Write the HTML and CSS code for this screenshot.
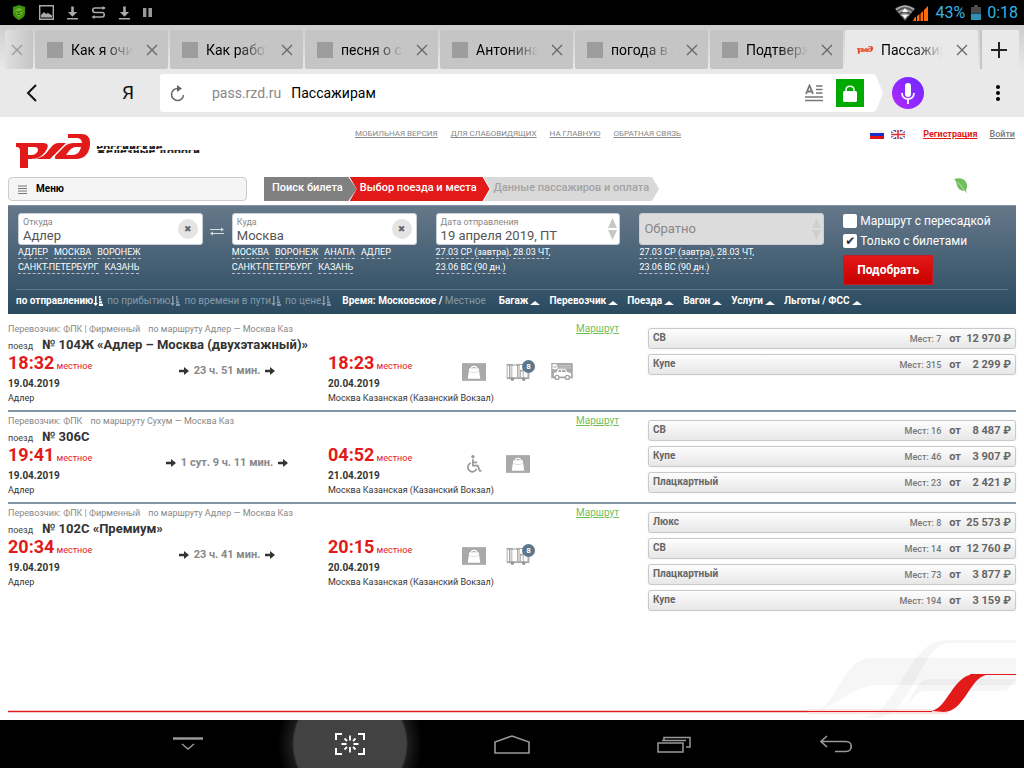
FILE: index.html
```html
<!DOCTYPE html>
<html lang="ru">
<head>
<meta charset="utf-8">
<title>Пассажирам</title>
<link rel="stylesheet" href="styles.css">
</head>
<body>
<svg class="defs" aria-hidden="true">
  <symbol id="x" viewBox="0 0 12 12"><path d="M1 1l10 10M11 1L1 11" stroke="currentColor" stroke-width="1.3" fill="none"/></symbol>
  <symbol id="dl" viewBox="0 0 12 14"><path d="M4.600 0h2.800v6H11L6 11 1 6h3.600zM0 12.500h12V14H0z" fill="currentColor"/></symbol>
  <symbol id="rzd" viewBox="0 0 74 34"><path fill="currentColor" fill-rule="evenodd" d="M0 9H27C33 9 33 13 29 18 26 22 22 25 15 25H12V34H4V17C4 14 3 13 0 13zM12 13V21H16C19 21 22 18 22 16 22 14 21 13 18 13z"/><path fill="currentColor" fill-rule="evenodd" d="M42 9H50L34 25H20L27 22C32 19 36 9 42 9zM52 0H65C71 0 74 3 74 9V11C73 20 68 25 60 25H41C38 25 38 23 41 20L48 13C51 10 54 9 58 9H66C66 6 64 4 60 4H52zM60 13C57 13 56 14 53 17L50 21H56C61 21 64 18 65 13z"/></symbol>
  <symbol id="sort" viewBox="0 0 10 10"><path fill="currentColor" d="M2 0h1.500v7H5L2.700 10 .300 7H2zM6 0h1.500v2H6zM6 2.600h2.300v2H6zM6 5.200h3v2H6zM6 7.800h4V10H6z"/></symbol>
  <symbol id="arrow" viewBox="0 0 10 8"><path fill="currentColor" d="M0 2.800h5V0l5 4-5 4V5.200H0z"/></symbol>
  <symbol id="bag" viewBox="0 0 23 17"><path fill="#a9a9a9" d="M0 0h23v17H0z"/><path fill="#fff" d="M7 5h9l1.500 10h-12z"/><path d="M9 5c0-2.500 5-2.500 5 0" fill="none" stroke="#fff" stroke-width="1.300"/><path d="M7 7.500c2 2 7 2 9 0" stroke="#ccc" stroke-width=".7" fill="none"/></symbol>
  <symbol id="cart" viewBox="0 0 24 19"><path fill="#a9a9a9" d="M0 1h24v16H0z"/><path fill="#fff" d="M1 3h1.500v12H1zM4 3h1v12H4zM6 3h5v12H6zM12.500 3h1v12h-1zM14 2h10v5H14zM15 9h2v6h-2zM18 8h4v7h-4z"/><path d="M7 1.500h3" stroke="#fff"/><circle cx="6" cy="17" r="2" fill="#999"/><circle cx="18" cy="17" r="2" fill="#999"/></symbol>
  <symbol id="car" viewBox="0 0 24 20"><path fill="#a9a9a9" d="M0 0h24v17H0z"/><path fill="#fff" d="M1.500 1.500H7V7H1.500zM3 14v-3l3-1 2-3.500h7.500L18 10l4 1.500V15H3z"/><path d="M2.500 3.500L4 5.500l3-4" fill="none" stroke="#a9a9a9"/><path d="M9 3h13M9 5.500h13" stroke="#d0d0d0"/><path fill="#a9a9a9" d="M7.500 10L9 7.500h2V10zm4.500 0V7.500h3l1.500 2.500z"/><g fill="#fff" stroke="#a0a0a0" stroke-width="1.500"><circle cx="6.500" cy="16" r="2.200"/><circle cx="18" cy="16" r="2.200"/></g></symbol>
  <symbol id="wheel" viewBox="0 0 14 17"><circle cx="6" cy="1.700" r="1.600" fill="#999"/><path d="M6 4v6h4.500l2 5H14M6 7h4M4 7.500a4.300 4.300 0 1 0 5.500 5.500" fill="none" stroke="#999" stroke-width="1.600"/></symbol>
</svg>

<header class="status">
  <div class="status-group">
    <svg class="shield" viewBox="0 0 14 16"><path d="M7 0l6.500 2v6c0 4-3 6.500-6.500 8C3.500 14.500.500 12 .500 8V2z" fill="#3f9410"/><path d="M3 5l4-2 4 2-1 5-3 3-3-3z" fill="#6cb52a"/><path d="M4 7l3 1 3-2M5 10h4" stroke="#245f0a" fill="none"/></svg>
    <svg width="15" height="15" viewBox="0 0 15 15"><path d="M.700.700h13.600v13.600H.700z" fill="none" stroke="#aaa" stroke-width="1.400"/><path d="M2 12.500V10l3-3 2 2 2-1 4 2.500v2z" fill="#aaa"/></svg>
    <svg width="11" height="14"><use href="#dl"/></svg>
    <svg width="15" height="13" viewBox="0 0 15 13"><path d="M14 2H4C1 2 1 6.500 4 6.500h7c3 0 3 4.500 0 4.500H2" stroke="#aaa" stroke-width="1.600" fill="none"/><path d="M11.500 0l3 2-3 2zM3.500 9l-3 2 3 2z" fill="#aaa"/></svg>
    <svg width="11" height="14"><use href="#dl"/></svg>
    <svg width="9" height="9" viewBox="0 0 9 9"><path d="M0 0h3.400v9H0zM5.400 0H9v9H5.400z" fill="#999"/></svg>
  </div>
  <div class="status-right">
    <svg width="34" height="16" viewBox="0 0 34 16"><path d="M0 4C6-1 14-1 20 4L10 16z" fill="#555"/><path d="M1 4.500C7 0 13 0 19 4.500M3.500 7.500c4-3.500 9-3.500 13 0M6 10.500c3-2 5-2 8 0" stroke="#aaa" stroke-width="1.600" fill="none"/><path d="M10 3l3 4H7zM10 14l-3-4h6z" fill="#fff"/><path d="M18 16h3v-4h-1zM22 16h2.500V9L22 11zM25.500 16H28V6l-2.500 2.500zM29 16h4V1l-4 4z" fill="#ff6a0a"/></svg>
    <span class="pct">43%</span>
    <svg width="10" height="15" viewBox="0 0 10 15"><path d="M3 0h4v2h3v6H0V2h3z" fill="#4a4a4a"/><path d="M0 8.500h10V15H0z" fill="#2f8fb5"/></svg>
    <span>0:18</span>
  </div>
</header>

<nav class="tabs" aria-label="Вкладки">
  <div class="tab cut"><button class="close" aria-label="Закрыть"><svg><use href="#x"/></svg></button></div>
  <div class="tab"><i class="fav"></i><span class="tt">Как я очищаю</span><button class="close" aria-label="Закрыть"><svg><use href="#x"/></svg></button></div>
  <div class="tab"><i class="fav"></i><span class="tt">Как работает</span><button class="close" aria-label="Закрыть"><svg><use href="#x"/></svg></button></div>
  <div class="tab"><i class="fav"></i><span class="tt">песня о себе</span><button class="close" aria-label="Закрыть"><svg><use href="#x"/></svg></button></div>
  <div class="tab"><i class="fav"></i><span class="tt">Антонина</span><button class="close" aria-label="Закрыть"><svg><use href="#x"/></svg></button></div>
  <div class="tab"><i class="fav"></i><span class="tt">погода в городе</span><button class="close" aria-label="Закрыть"><svg><use href="#x"/></svg></button></div>
  <div class="tab"><i class="fav"></i><span class="tt">Подтверждение</span><button class="close" aria-label="Закрыть"><svg><use href="#x"/></svg></button></div>
  <div class="tab active"><svg class="fav-rzd"><use href="#rzd"/></svg><span class="tt">Пассажирам</span><button class="close" aria-label="Закрыть"><svg><use href="#x"/></svg></button></div>
  <button class="new-tab" aria-label="Новая вкладка"><svg width="16" height="16" viewBox="0 0 16 16"><path d="M8 0v16M0 8h16" stroke="#222" stroke-width="2"/></svg></button>
</nav>

<div class="toolbar">
  <button class="tool back" aria-label="Назад"><svg width="11" height="18" viewBox="0 0 11 18"><path d="M10 1L2 9l8 8" stroke="#111" stroke-width="2" fill="none"/></svg></button>
  <button class="tool ya">Я</button>
  <div class="address">
    <button class="tool reload" aria-label="Обновить"><svg width="15" height="17" viewBox="0 0 15 17"><path d="M8 3.500A6 6 0 1 0 13.500 10" stroke="#666" stroke-width="1.500" fill="none"/><path d="M7 0l5 3.500L7 7z" fill="#666"/></svg></button>
    <span class="host">pass.rzd.ru</span><span class="name">Пассажирам</span>
    <svg class="reader" width="18" height="18" viewBox="0 0 18 18"><path d="M1 10L4.500 1.500 8 10M2.500 7.500h4" stroke="#777" stroke-width="1.800" fill="none"/><path d="M11 2h6.500M11 5.500h6.500M11 9h6.500M0 13h18M0 16.500h18" stroke="#777" stroke-width="1.600"/></svg>
    <span class="lock"><svg width="14" height="17" viewBox="0 0 14 17"><path d="M3 7V5c0-5 8-5 8 0v2" stroke="#fff" stroke-width="1.500" fill="none"/><rect y="6" width="14" height="11" rx="1.500" fill="#fff"/></svg></span>
  </div>
  <svg class="tip" width="11" height="38" viewBox="0 0 11 38"><path d="M0 0c3 0 4 2 5 4l6 15-6 15c-1 2-2 4-5 4z" fill="#fff"/></svg>
  <button class="mic" aria-label="Голосовой поиск"><svg width="14" height="21" viewBox="0 0 14 21"><rect x="4" width="6" height="14" rx="3" fill="#fff"/><path d="M1 10c0 8 12 8 12 0M7 16v5" stroke="#fff" stroke-width="1.800" fill="none"/></svg></button>
  <button class="tool dots" aria-label="Меню браузера"><svg width="4" height="16" viewBox="0 0 4 16"><circle cx="2" cy="2" r="2"/><circle cx="2" cy="8" r="2"/><circle cx="2" cy="14" r="2"/></svg></button>
</div>

<main class="page">
  <div class="head">
    <a class="logo" href="#"><svg class="logo-mark"><use href="#rzd"/></svg><span class="logo-text"><span>Российские</span><span>железные дороги</span></span></a>
    <nav class="links"><a href="#">МОБИЛЬНАЯ ВЕРСИЯ</a><a href="#">ДЛЯ СЛАБОВИДЯЩИХ</a><a href="#">НА ГЛАВНУЮ</a><a href="#">ОБРАТНАЯ СВЯЗЬ</a></nav>
    <div class="account">
      <svg width="14" height="9" viewBox="0 0 14 9"><path fill="#f2f2f2" d="M0 0h14v3H0z"/><path fill="#1c2ed0" d="M0 3h14v3H0z"/><path fill="#e21010" d="M0 6h14v3H0z"/></svg>
      <svg width="14" height="9" viewBox="0 0 14 9"><path fill="#51589e" d="M0 0h14v9H0z"/><path d="M0 0l14 9M14 0L0 9" stroke="#fff" stroke-width="1.500"/><path d="M7 0v9M0 4.500h14" stroke="#fff" stroke-width="3.500"/><path d="M7 0v9M0 4.500h14" stroke="#e03030" stroke-width="1.600"/></svg>
      <a class="reg" href="#">Регистрация</a><a class="login" href="#">Войти</a>
    </div>
  </div>

  <div class="crumbs-row">
    <button class="menu"><svg width="9" height="9" viewBox="0 0 9 9"><path d="M0 1h9M0 3.500h9M0 6h9M0 8.500h9" stroke="#777"/></svg>Меню</button>
    <ol class="crumbs"><li class="c1">Поиск билета</li><li class="c2">Выбор поезда и места</li><li class="c3">Данные пассажиров и оплата</li></ol>
    <svg class="leaf" width="14" height="16" viewBox="0 0 14 16"><path d="M0 1c6-2 11 0 12.500 4 1 3 .500 5-.500 8l1 3-2-3C5 13 3 9 2.500 5 2 3 1 2 0 1z" fill="#6fc05a"/><path d="M4 4l7 9" stroke="#d4ecce" stroke-width=".7" fill="none"/></svg>
  </div>

  <form class="search">
    <div class="fields">
      <div class="route">
        <div class="col">
          <div class="field"><div class="fbox"><label for="from">Откуда</label><input id="from" value="Адлер"></div><button type="button" class="clear" aria-label="Очистить">✖</button></div>
          <div class="hints"><a href="#">АДЛЕР</a><a href="#">МОСКВА</a><a href="#">ВОРОНЕЖ</a><br><a href="#">САНКТ-ПЕТЕРБУРГ</a><a href="#">КАЗАНЬ</a></div>
        </div>
        <button type="button" class="swap" aria-label="Поменять местами"><svg width="14" height="9" viewBox="0 0 14 9"><path d="M0 2.500h12M2 6.500h12" stroke="#d5dce2" fill="none"/><path d="M11 .500l3 2-3 2zM3 4.500l-3 2 3 2z" fill="#d5dce2"/></svg></button>
        <div class="col">
          <div class="field"><div class="fbox"><label for="to">Куда</label><input id="to" value="Москва"></div><button type="button" class="clear" aria-label="Очистить">✖</button></div>
          <div class="hints"><a href="#">МОСКВА</a><a href="#">ВОРОНЕЖ</a><a href="#">АНАПА</a><a href="#">АДЛЕР</a><br><a href="#">САНКТ-ПЕТЕРБУРГ</a><a href="#">КАЗАНЬ</a></div>
        </div>
      </div>
      <div class="col">
        <div class="field"><div class="fbox"><label for="date">Дата отправления</label><input id="date" value="19 апреля 2019, ПТ"></div><svg class="spin" width="9" height="22" viewBox="0 0 9 22"><path d="M4.500 0L9 10H0zM4.500 22L0 12h9z" fill="currentColor"/></svg></div>
        <div class="hints dates"><a href="#">27.03 СР (завтра)</a>, <a href="#">28.03 ЧТ</a>,<br><a href="#">23.06 ВС (90 дн.)</a></div>
      </div>
      <div class="col">
        <div class="field off"><div class="fbox"><input aria-label="Обратно" placeholder="Обратно"></div><svg class="spin" width="9" height="22" viewBox="0 0 9 22"><path d="M4.500 0L9 10H0zM4.500 22L0 12h9z" fill="currentColor"/></svg></div>
        <div class="hints dates"><a href="#">27.03 СР (завтра)</a>, <a href="#">28.03 ЧТ</a>,<br><a href="#">23.06 ВС (90 дн.)</a></div>
      </div>
      <div class="opts">
        <label><input type="checkbox">Маршрут с пересадкой</label>
        <label><input type="checkbox" checked>Только с билетами</label>
        <button type="button" class="submit">Подобрать</button>
      </div>
    </div>
    <div class="filters">
      <div class="sorts"><a class="on" href="#">по отправлению<svg><use href="#sort"/></svg></a><a href="#">по прибытию<svg><use href="#sort"/></svg></a><a href="#">по времени в пути<svg><use href="#sort"/></svg></a><a href="#">по цене<svg><use href="#sort"/></svg></a></div>
      <div class="time">Время: <a href="#">Московское</a> / <a class="dim" href="#">Местное</a></div>
      <a class="flt" href="#">Багаж</a><a class="flt" href="#">Перевозчик</a><a class="flt" href="#">Поезда</a><a class="flt" href="#">Вагон</a><a class="flt" href="#">Услуги</a><a class="flt" href="#">Льготы / ФСС</a>
    </div>
  </form>

  <section class="trains">
    <article class="train">
      <div class="info">
        <div class="carrier"><span>Перевозчик: ФПК | Фирменный</span><span>по маршруту Адлер — Москва Каз</span><a href="#">Маршрут</a></div>
        <h2><small>поезд</small>№ 104Ж «Адлер – Москва (двухэтажный)»</h2>
        <div class="when">
          <div><p class="clock"><b>18:32</b> местное</p><p class="date">19.04.2019</p></div>
          <p class="dur"><svg><use href="#arrow"/></svg>23 ч. 51 мин.<svg><use href="#arrow"/></svg></p>
          <div><p class="clock"><b>18:23</b> местное</p><p class="date">20.04.2019</p></div>
          <div class="serv"><svg class="ic"><use href="#bag"/></svg><span class="badged"><svg class="ic"><use href="#cart"/></svg><i>8</i></span><svg class="ic"><use href="#car"/></svg></div>
        </div>
        <div class="places"><span>Адлер</span><span>Москва Казанская (Казанский Вокзал)</span></div>
      </div>
      <div class="prices">
        <button class="price"><b>СВ</b><span>Мест: 7</span><em>от</em><strong>12 970 ₽</strong></button>
        <button class="price"><b>Купе</b><span>Мест: 315</span><em>от</em><strong>2 299 ₽</strong></button>
      </div>
    </article>
    <article class="train">
      <div class="info">
        <div class="carrier"><span>Перевозчик: ФПК</span><span>по маршруту Сухум — Москва Каз</span><a href="#">Маршрут</a></div>
        <h2><small>поезд</small>№ 306С</h2>
        <div class="when">
          <div><p class="clock"><b>19:41</b> местное</p><p class="date">19.04.2019</p></div>
          <p class="dur"><svg><use href="#arrow"/></svg>1 сут. 9 ч. 11 мин.<svg><use href="#arrow"/></svg></p>
          <div><p class="clock"><b>04:52</b> местное</p><p class="date">21.04.2019</p></div>
          <div class="serv"><svg class="ic"><use href="#wheel"/></svg><svg class="ic"><use href="#bag"/></svg></div>
        </div>
        <div class="places"><span>Адлер</span><span>Москва Казанская (Казанский Вокзал)</span></div>
      </div>
      <div class="prices">
        <button class="price"><b>СВ</b><span>Мест: 16</span><em>от</em><strong>8 487 ₽</strong></button>
        <button class="price"><b>Купе</b><span>Мест: 46</span><em>от</em><strong>3 907 ₽</strong></button>
        <button class="price"><b>Плацкартный</b><span>Мест: 23</span><em>от</em><strong>2 421 ₽</strong></button>
      </div>
    </article>
    <article class="train">
      <div class="info">
        <div class="carrier"><span>Перевозчик: ФПК | Фирменный</span><span>по маршруту Адлер — Москва Каз</span><a href="#">Маршрут</a></div>
        <h2><small>поезд</small>№ 102С «Премиум»</h2>
        <div class="when">
          <div><p class="clock"><b>20:34</b> местное</p><p class="date">19.04.2019</p></div>
          <p class="dur"><svg><use href="#arrow"/></svg>23 ч. 41 мин.<svg><use href="#arrow"/></svg></p>
          <div><p class="clock"><b>20:15</b> местное</p><p class="date">20.04.2019</p></div>
          <div class="serv"><svg class="ic"><use href="#bag"/></svg><span class="badged"><svg class="ic"><use href="#cart"/></svg><i>8</i></span></div>
        </div>
        <div class="places"><span>Адлер</span><span>Москва Казанская (Казанский Вокзал)</span></div>
      </div>
      <div class="prices">
        <button class="price"><b>Люкс</b><span>Мест: 8</span><em>от</em><strong>25 573 ₽</strong></button>
        <button class="price"><b>СВ</b><span>Мест: 14</span><em>от</em><strong>12 760 ₽</strong></button>
        <button class="price"><b>Плацкартный</b><span>Мест: 73</span><em>от</em><strong>3 877 ₽</strong></button>
        <button class="price"><b>Купе</b><span>Мест: 194</span><em>от</em><strong>3 159 ₽</strong></button>
      </div>
    </article>
  </section>

  <footer class="foot">
    <div class="rail"></div>
    <svg width="208" height="80" viewBox="0 0 208 80"><g fill="#000" fill-opacity=".035"><path d="M8 71C28 66 36 18 62 18H208V45H68C50 45 28 64 10 72z"/><path d="M52 78C92 76 98 0 138 0H208V3H142C112 3 104 78 68 78z"/><path d="M94 70C104 64 106 39 122 39H208L198 51H118C106 51 104 64 94 70z"/></g><path d="M0 70h122M0 73h140" stroke="#f6caca"/><path d="M0 71h124v1H0zM162 34h46v1h-46z" fill="#e21a1a"/><path d="M122 71C140 70 144 34 168 34L178 35C162 38 156 72 136 72z" fill="#e21a1a"/></svg>
  </footer>
</main>

<nav class="softkeys" aria-label="Системные кнопки">
  <button aria-label="Скрыть"><svg width="30" height="14" viewBox="0 0 30 14"><path d="M0 1.500h30" stroke="#999" stroke-width="2.500"/><path d="M9 7l6 5 6-5" stroke="#999" stroke-width="1.500" fill="none"/></svg></button>
  <button class="shot" aria-label="Снимок экрана"><svg width="30" height="22" viewBox="0 0 30 22"><path d="M1 7V1h6M23 1h6v6M29 15v6h-6M7 21H1v-6" stroke="#fff" stroke-width="2" fill="none"/><path d="M15 2.500v5M15 14v5.500M6.500 11h5M18.500 11h5M9.500 5.500l2.500 2.500M20.500 5.500L18 8M9.500 16.500L12 14M20.500 16.500L18 14" stroke="#fff" stroke-width="1.800"/></svg></button>
  <button aria-label="Домой"><svg width="36" height="19" viewBox="0 0 36 19"><path d="M1 18V7L18 1l17 6v11z" stroke="#999" stroke-width="1.600" fill="none"/></svg></button>
  <button aria-label="Недавние"><svg width="34" height="17" viewBox="0 0 34 17"><path d="M1 7h25v9H1zM7 4V1.500h26V11h-4M5 4.500h24" stroke="#999" stroke-width="1.500" fill="none"/></svg></button>
  <button aria-label="Назад"><svg width="32" height="18" viewBox="0 0 32 18"><path d="M7 1L1 6.500 7 12M1 6.500h25c7 0 7 10 0 10H15" stroke="#999" stroke-width="1.600" fill="none"/></svg></button>
</nav>
</body>
</html>
```

FILE: styles.css
```css
* { box-sizing: border-box; }
body { margin: 0; min-height: 100vh; display: flex; flex-direction: column; background: #fff; color: #333; font: 10px/14px Roboto, "Noto Sans", sans-serif; }
button, input { font: inherit; color: inherit; border: 0; background: none; padding: 0; margin: 0; }
p, h2, ol { margin: 0; padding: 0; }
a { color: inherit; }
svg { display: block; flex: none; }
.defs { position: absolute; width: 0; height: 0; }

.status { display: flex; justify-content: space-between; align-items: center; height: 25px; padding: 0 6px 0 12px; background: #000; color: #33b5e5; font-size: 16px; }
.status-group { display: flex; align-items: center; gap: 13px; color: #aaa; }
.shield { width: 14px; height: 15px; }
.status-right { display: flex; align-items: center; gap: 6px; }

.tabs { display: flex; gap: 2px; padding: 5px 5px 1px; background: linear-gradient(#cdcdcd, #e9e9e9); }
.tab { flex: 1 1 0; min-width: 0; display: flex; align-items: center; height: 39px; padding: 0 10px 0 12px; border-radius: 2px; background: #c5c5c5; color: #000; font-size: 14px; line-height: 20px; }
.tab.cut { flex: none; width: 28px; padding: 0 6px; background: linear-gradient(90deg, #e0e0e0, #c5c5c5); color: #888; }
.tab.active { background: #e9e9e9; }
.fav { flex: none; width: 16px; height: 16px; margin-right: 8px; background: #9d9d9d; }
.fav-rzd { width: 16px; height: 8px; margin-right: 8px; color: #e8401c; }
.tt { flex: 1; min-width: 0; overflow: hidden; white-space: nowrap; margin-right: 13px; -webkit-mask-image: linear-gradient(90deg, #000 50%, transparent); mask-image: linear-gradient(90deg, #000 50%, transparent); }
.close { flex: none; color: #666; }
.close svg { width: 12px; height: 12px; }
.tab.cut .close { color: #999; }
.new-tab { flex: none; width: 39px; padding-right: 4px; display: flex; align-items: center; justify-content: center; background: #e9e9e9; border-left: 2px solid #c5c5c5; }

.toolbar { display: flex; align-items: center; height: 47px; padding: 0 24px 1px 0; background: #e9e9e9; }
.tool { display: flex; align-items: center; justify-content: center; }
.back { width: 62px; }
.ya { width: 98px; padding-left: 34px; color: #111; font-size: 19px; line-height: 24px; }
.address { flex: 1; display: flex; align-items: center; height: 38px; padding: 0 8px 0 10px; border-radius: 3px 0 0 3px; background: #fff; font-size: 14px; line-height: 20px; }
.reload { margin-right: 27px; }
.host { color: #888; margin-right: 10px; }
.name { flex: 1; color: #000; }
.reader { margin-right: 13px; }
.lock { display: flex; align-items: center; justify-content: center; width: 28px; height: 28px; background: #00a900; }
.mic { display: flex; align-items: center; justify-content: center; width: 32px; height: 32px; margin-left: 9px; border-radius: 50%; background: linear-gradient(45deg, #b429ff, #6a29ff); }
.dots { margin-left: 72px; }

.page { flex: 1; display: flex; flex-direction: column; padding: 0 8px; }
.head { display: flex; align-items: flex-start; height: 60px; padding-top: 10px; }
.logo { display: flex; align-items: center; gap: 6px; width: 347px; padding: 7px 0 0 8px; text-decoration: none; }
.logo-mark { width: 74px; height: 34px; color: #e21a1a; }
.logo-text { display: flex; flex-direction: column; gap: 1px; padding-bottom: 3px; color: #222; font: bold 10px/3px "DejaVu Sans", sans-serif; }
.logo-text span { height: 3px; overflow: hidden; white-space: nowrap; }
.links { display: flex; gap: 13px; color: #888; font-size: 8px; white-space: nowrap; }
.account { display: flex; align-items: center; gap: 7px; margin-left: auto; padding-right: 1px; font-size: 9px; font-weight: 500; }
.reg { margin: 0 5px 0 11px; color: #e21a1a; font-weight: 700; }
.login { color: #777; }

.crumbs-row { display: flex; align-items: center; height: 24px; margin-bottom: 4px; }
.menu { display: flex; align-items: center; gap: 9px; width: 239px; height: 24px; padding: 0 9px; border: 1px solid #ccc; border-radius: 4px; background: #f5f5f5; color: #000; font-weight: 700; }
.crumbs { display: flex; list-style: none; margin-left: 17px; font-size: 11px; font-weight: 500; white-space: nowrap; color: #fff; }
.crumbs li { height: 24px; line-height: 22px; }
.c1 { padding: 0 14px 0 8px; background: #808080; clip-path: polygon(0 0, 91% 0, 100% 50%, 91% 100%, 0 100%); }
.c2 { padding: 0 13px 0 10px; margin-left: -7px; background: #e21a1a; clip-path: polygon(0 0, 95% 0, 100% 50%, 95% 100%, 0 100%, 5% 50%); }
.c3 { padding: 0 10px 0 10px; margin-left: -6px; background: #d9d9d9; color: #a3a3a3; clip-path: polygon(0 0, 96% 0, 100% 50%, 96% 100%, 0 100%, 4% 50%); }
.leaf { margin: 0 48px 6px auto; }

.search { border-top: 1px solid #8494a3; background: linear-gradient(#66788a, #2a4a60); color: #fff; padding: 7px 8px 0; }
.fields { display: flex; gap: 19px; height: 76px; padding-left: 2px; }
.route { display: flex; flex: 399 1 0; }
.col { flex: 185 1 0; min-width: 0; }
.field { display: flex; align-items: center; height: 32px; padding: 0 6px 0 4px; border: 1px solid #c8cfd6; border-radius: 3px; background: #fff; color: #555; }
.fbox { flex: 1; min-width: 0; display: flex; flex-direction: column; }
.fbox label { color: #888; font-size: 9px; line-height: 11px; padding-top: 2px; }
.fbox input { width: 100%; height: 16px; font-size: 13px; line-height: 16px; color: #555; }
.fbox input::placeholder { color: #888; opacity: 1; }
.off { background: #dcdcdc; }
.clear { width: 20px; height: 20px; margin-right: -2px; border-radius: 50%; background: #e4e4e4; color: #666; font: 9px/20px "DejaVu Sans", sans-serif; }
.spin { color: #c8c8c8; margin-right: -4px; }
.off .spin { color: #cfcfcf; }
.swap { width: 29px; height: 36px; display: flex; align-items: center; justify-content: center; }
.hints { font-size: 9px; line-height: 15px; white-space: nowrap; }
.hints a { margin-right: 6px; padding-bottom: 1px; text-decoration: none; border-bottom: 1px dashed #b5c0c9; }
.hints.dates a { margin-right: 0; }
.opts { flex: 165 1 0; min-width: 0; font-size: 12px; font-weight: 400; }
.opts label { display: flex; align-items: center; gap: 3px; height: 20px; white-space: nowrap; }
.opts label:first-child { height: 16px; margin-bottom: 2px; }
.opts input { appearance: none; flex: none; width: 14px; height: 14px; border-radius: 2px; background: #fff; color: #333; font: 12px/14px "DejaVu Sans", sans-serif; text-align: center; }
.opts input:checked::before { content: "✔"; }
.submit { width: 90px; height: 30px; margin-top: 4px; background: linear-gradient(#e31818, #c80000); border: 1px solid #c31c22; font-size: 12px; font-weight: 700; }
.filters { display: flex; align-items: center; gap: 9px; height: 25px; padding-bottom: 2px; border-top: 1px solid #5f7789; font-size: 10px; font-weight: 500; white-space: nowrap; }
.filters a { text-decoration: none; }
.sorts { display: flex; gap: 4px; margin-right: 2px; }
.sorts a { display: flex; align-items: center; color: #8699a6; font-weight: 400; }
.sorts a.on { color: #fff; font-weight: 700; }
.sorts svg { width: 10px; height: 10px; }
.time { margin-right: 4px; font-weight: 700; }
.filters .dim { color: #8699a6; font-weight: 400; }
.flt { display: flex; align-items: center; gap: 2px; font-weight: 700; }
.flt::after { content: ""; border: 5px solid transparent; border-top: 0; border-bottom: 4px solid #fff; margin-top: 4px; }

.trains { padding-top: 6px; }
.train { display: grid; grid-template-columns: 640fr 368fr; min-height: 92px; border-bottom: 2px solid #8496a4; }
.train:last-child { border-bottom: 0; }
.info { padding-top: 2px; }
.carrier { display: flex; gap: 8px; padding-right: 29px; color: #888; font-size: 9px; line-height: 14px; }
.carrier a { margin-left: auto; color: #6fc05a; font-size: 10px; }
.info h2 { display: flex; align-items: baseline; gap: 9px; color: #333; font-size: 13px; line-height: 17px; font-weight: 700; }
.info small { font-size: 9px; font-weight: 400; color: #444; }
.when { display: grid; grid-template-columns: 118fr 202fr 134fr 186fr; align-items: center; }
.clock { height: 20px; color: #e21a1a; font-size: 9px; line-height: 16px; }
.clock b { font-size: 18px; font-weight: 700; }
.date { font-weight: 700; font-size: 10px; line-height: 18px; }
.dur { display: flex; align-items: center; justify-content: center; gap: 5px; color: #888; font-size: 11px; font-weight: 700; padding-bottom: 7px; }
.dur svg { width: 10px; height: 8px; color: #333; }
.serv { display: flex; gap: 20px; padding-bottom: 4px; }
.ic { width: 24px; height: 18px; }
.badged { position: relative; }
.badged i { position: absolute; top: -3px; right: -5px; width: 13px; height: 13px; border-radius: 50%; background: #5e768b; color: #fff; font: bold 8px/13px Roboto, sans-serif; text-align: center; }
.places { display: grid; grid-template-columns: 1fr 1fr; font-size: 9px; line-height: 10px; }
.prices { display: flex; flex-direction: column; gap: 5px; padding: 8px 0; }
.price { display: flex; align-items: center; height: 21px; padding: 0 4px; border: 1px solid #c9c9c9; border-radius: 3px; background: linear-gradient(#fdfdfd, #e7e7e7); box-shadow: 0 0 1px #ccc; color: #666; font-size: 10px; line-height: 16px; }
.price b { flex: 1; padding-bottom: 2px; text-align: left; }
.price span { font-size: 9px; font-weight: 500; color: #777; }
.price em { margin-left: 8px; font-size: 11px; font-style: normal; font-weight: 700; }
.price strong { width: 50px; font-size: 11px; text-align: right; white-space: nowrap; }

.foot { display: flex; align-items: flex-end; margin-top: auto; }
.rail { flex: 1; height: 1px; margin-bottom: 8px; background: #e21a1a; box-shadow: 0 1px #f6caca, 0 -1px #f6caca; }

.softkeys { display: flex; justify-content: center; height: 48px; overflow: hidden; background: #000; }
.softkeys button { flex: 0 1 162px; display: flex; align-items: center; justify-content: center; }
.softkeys .shot { background: radial-gradient(circle, #424242 56px, #1c1c1c 58px, #000 72px); }
```
